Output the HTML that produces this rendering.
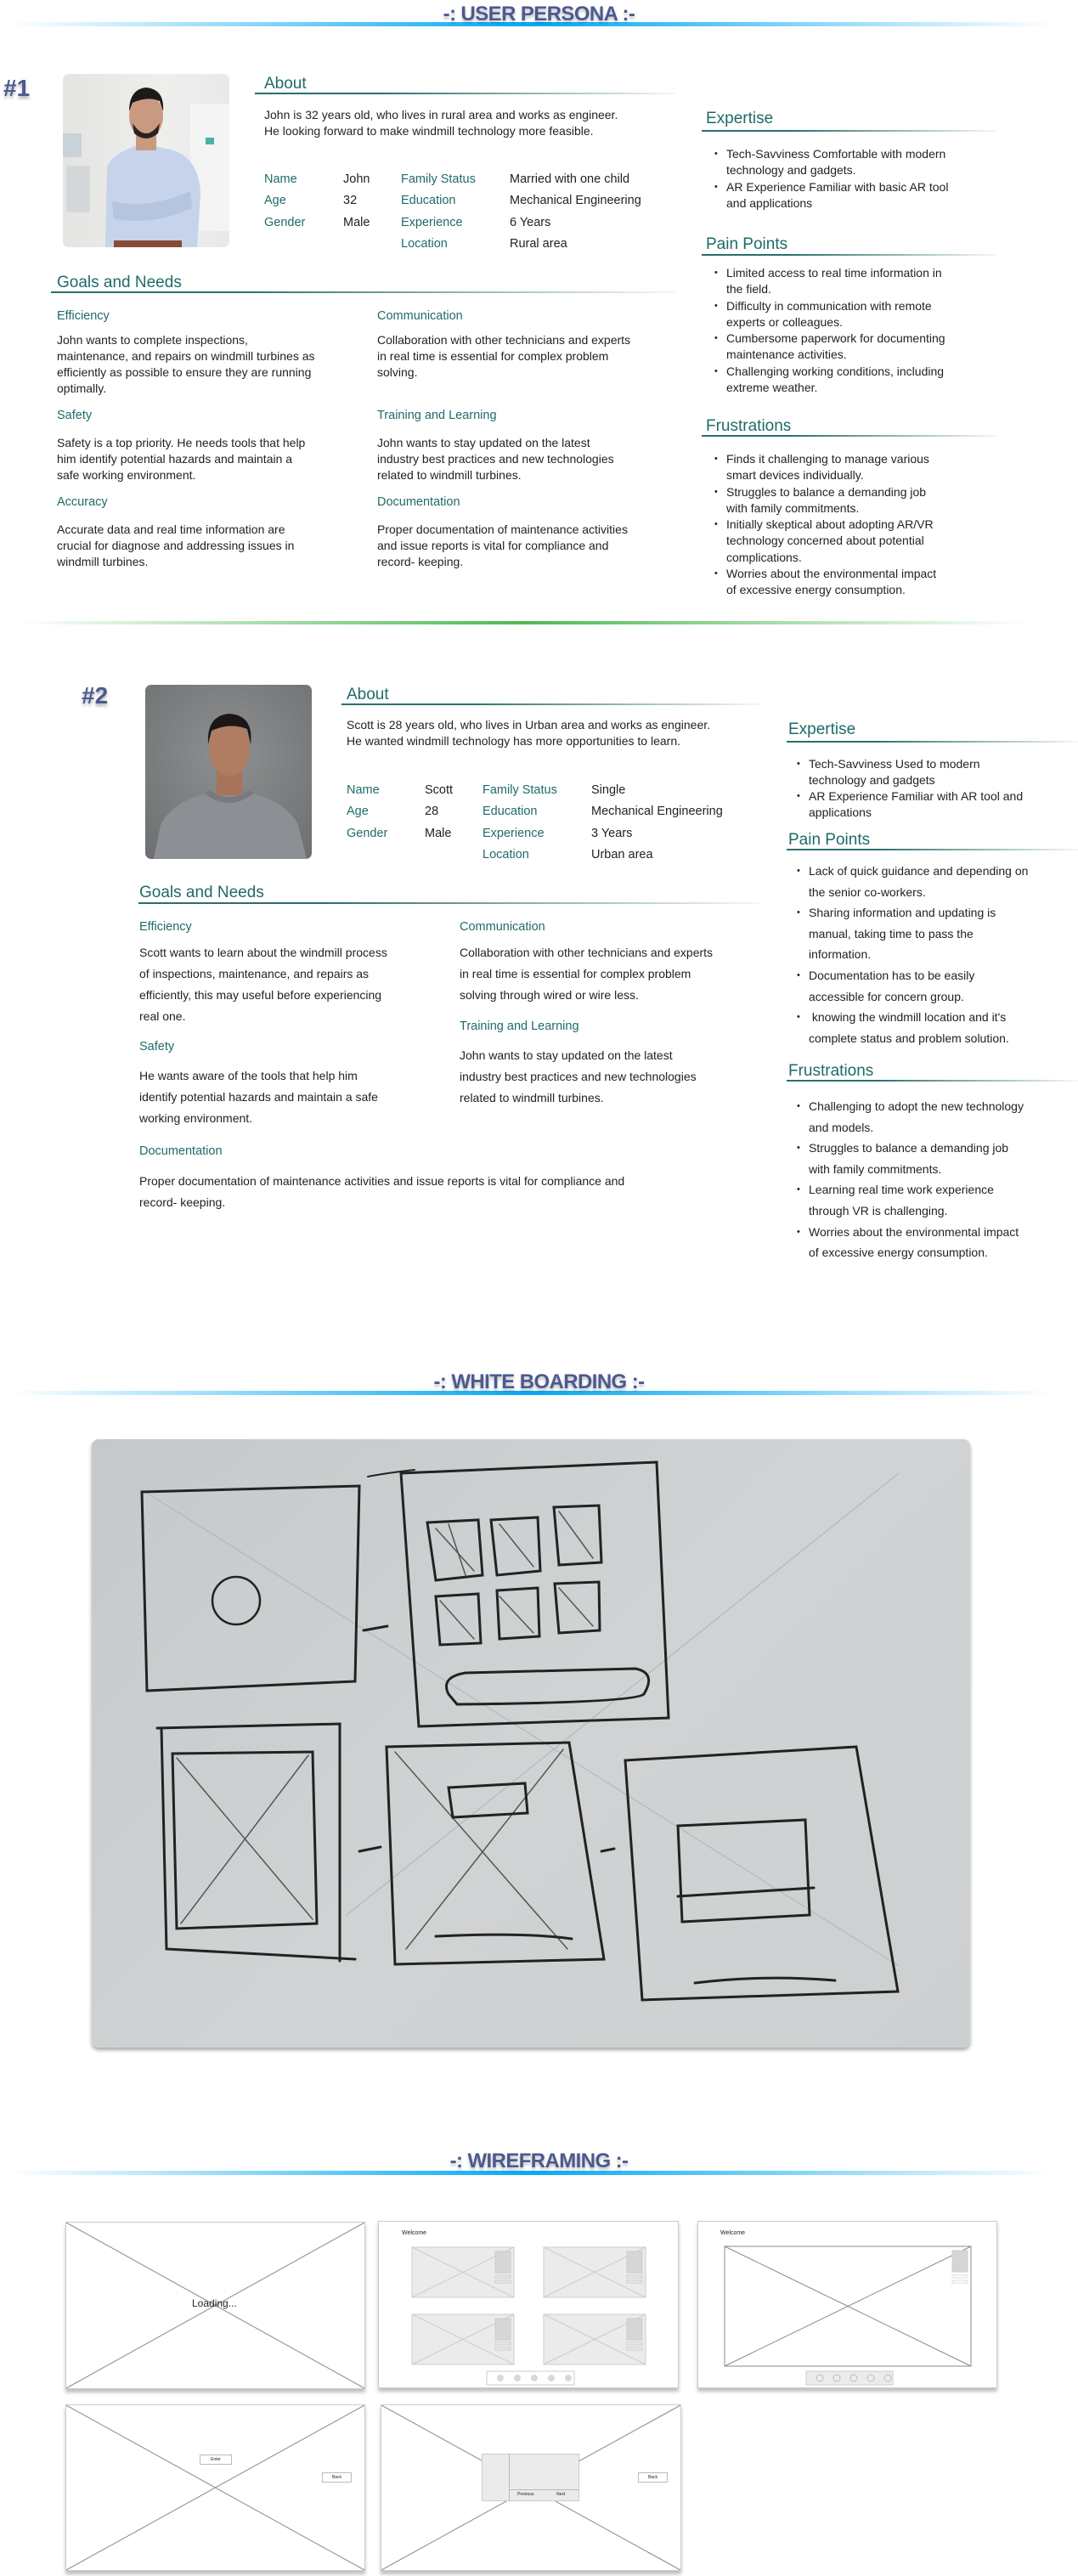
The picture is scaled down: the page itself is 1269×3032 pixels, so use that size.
<!DOCTYPE html>
<html><head><meta charset="utf-8">
<style>
*{margin:0;padding:0;box-sizing:border-box}
body{width:1269px;height:3032px;position:relative;background:#fff;font-family:"Liberation Sans",sans-serif;color:#222;overflow:hidden}
.a{position:absolute}
.title{position:absolute;left:0;width:1269px;text-align:center;font-weight:bold;font-size:24px;color:#4b5a8e;letter-spacing:-0.6px;text-shadow:0 3px 3px rgba(0,0,0,.25);z-index:2;line-height:30px}
.bar{position:absolute;left:10px;width:1230px;height:5px;background:linear-gradient(90deg,rgba(3,169,244,0),#03a9f4 50%,rgba(3,169,244,0))}
.num{position:absolute;font-weight:bold;font-size:28px;color:#4b5a8e;text-shadow:0 3px 3px rgba(0,0,0,.3);line-height:30px}
.h{position:absolute;color:#1e6b68;font-size:19px;line-height:22px}
.hl{position:absolute;height:2px;background:linear-gradient(90deg,#2a6f6c,#2a6f6c 30%,rgba(42,111,108,0.05))}
.lb{position:absolute;color:#1e6b68;font-size:14.5px;line-height:20px}
.t{position:absolute;font-size:14px;color:#222;white-space:nowrap}
.tb{position:absolute;font-size:14.5px}
.tb div{height:25.3px;line-height:25.3px;white-space:nowrap}
.tb .k{color:#1e6b68}
ul{position:absolute;list-style:none;font-size:14px;white-space:nowrap}
ul li{position:relative;padding-left:14px}
ul li:before{content:"•";position:absolute;left:0;font-size:11px}
.card{position:absolute;background:#fff;border:1px solid #ccc;box-shadow:0 4px 4px rgba(0,0,0,.25)}
</style></head><body>

<div class="bar" style="top:26px"></div>
<div class="title" style="top:2px">-: USER PERSONA :-</div>

<!-- Persona 1 -->
<div class="num" style="left:4px;top:89px">#1</div>
<div class="a" style="left:74px;top:87px;width:196px;height:204px;border-radius:7px;overflow:hidden;background:linear-gradient(90deg,#e4e4e2,#eeeeec 60%,#e8eaea)">
<svg width="196" height="204" viewBox="0 0 196 204">
<rect x="150" y="35" width="46" height="150" fill="#f3f4f3"/>
<rect x="168" y="75" width="10" height="8" fill="#4ab0a8"/>
<rect x="0" y="70" width="22" height="28" fill="#c9d2d6"/>
<rect x="4" y="108" width="28" height="55" fill="#d5d8db"/>
<path d="M50 204 L52 110 Q58 92 95 82 L130 90 Q160 100 162 140 L158 204 Z" fill="#c6d3ea"/>
<path d="M58 150 Q100 160 150 138 L152 158 Q100 180 60 170 Z" fill="#b5c4df"/>
<rect x="86" y="68" width="24" height="22" fill="#c99a80"/>
<ellipse cx="98" cy="50" rx="20" ry="26" fill="#c99a80"/>
<path d="M78 44 Q78 18 98 16 Q120 18 118 44 L114 32 Q100 26 82 34 Z" fill="#1e1a18"/>
<path d="M82 58 Q98 82 114 58 L112 70 Q98 82 84 70 Z" fill="#2a2220"/>
<rect x="60" y="196" width="80" height="8" fill="#8a4a36"/>
</svg></div>

<div class="h" style="left:311px;top:88px">About</div>
<div class="hl" style="left:300px;top:109px;width:495px"></div>
<div class="t" style="left:311px;top:126px;line-height:19px">John is 32 years old, who lives in rural area and works as engineer.<br>He looking forward to make windmill technology more feasible.</div>

<div class="tb" style="left:311px;top:199px"><div class="k">Name</div><div class="k">Age</div><div class="k">Gender</div></div>
<div class="tb" style="left:404px;top:199px"><div>John</div><div>32</div><div>Male</div></div>
<div class="tb" style="left:472px;top:199px"><div class="k">Family Status</div><div class="k">Education</div><div class="k">Experience</div><div class="k">Location</div></div>
<div class="tb" style="left:600px;top:199px"><div>Married with one child</div><div>Mechanical Engineering</div><div>6 Years</div><div>Rural area</div></div>

<div class="h" style="left:67px;top:322px">Goals and Needs</div>
<div class="hl" style="left:60px;top:343px;width:735px"></div>

<div class="lb" style="left:67px;top:362px">Efficiency</div>
<div class="t" style="left:67px;top:391px;line-height:19px">John wants to complete inspections,<br>maintenance, and repairs on windmill turbines as<br>efficiently as possible to ensure they are running<br>optimally.</div>
<div class="lb" style="left:67px;top:479px">Safety</div>
<div class="t" style="left:67px;top:512px;line-height:19px">Safety is a top priority. He needs tools that help<br>him identify potential hazards and maintain a<br>safe working environment.</div>
<div class="lb" style="left:67px;top:581px">Accuracy</div>
<div class="t" style="left:67px;top:614px;line-height:19px">Accurate data and real time information are<br>crucial for diagnose and addressing issues in<br>windmill turbines.</div>

<div class="lb" style="left:444px;top:362px">Communication</div>
<div class="t" style="left:444px;top:391px;line-height:19px">Collaboration with other technicians and experts<br>in real time is essential for complex problem<br>solving.</div>
<div class="lb" style="left:444px;top:479px">Training and Learning</div>
<div class="t" style="left:444px;top:512px;line-height:19px">John wants to stay updated on the latest<br>industry best practices and new technologies<br>related to windmill turbines.</div>
<div class="lb" style="left:444px;top:581px">Documentation</div>
<div class="t" style="left:444px;top:614px;line-height:19px">Proper documentation of maintenance activities<br>and issue reports is vital for compliance and<br>record- keeping.</div>

<div class="h" style="left:831px;top:129px">Expertise</div>
<div class="hl" style="left:826px;top:153px;width:347px"></div>
<ul style="left:841px;top:172px;line-height:19.3px">
<li>Tech-Savviness Comfortable with modern<br>technology and gadgets.</li>
<li>AR Experience Familiar with basic AR tool<br>and applications</li></ul>
<div class="h" style="left:831px;top:277px">Pain Points</div>
<div class="hl" style="left:826px;top:299px;width:347px"></div>
<ul style="left:841px;top:312px;line-height:19.3px">
<li>Limited access to real time information in<br>the field.</li>
<li>Difficulty in communication with remote<br>experts or colleagues.</li>
<li>Cumbersome paperwork for documenting<br>maintenance activities.</li>
<li>Challenging working conditions, including<br>extreme weather.</li></ul>
<div class="h" style="left:831px;top:491px">Frustrations</div>
<div class="hl" style="left:826px;top:512px;width:347px"></div>
<ul style="left:841px;top:531px;line-height:19.3px">
<li>Finds it challenging to manage various<br>smart devices individually.</li>
<li>Struggles to balance a demanding job<br>with family commitments.</li>
<li>Initially skeptical about adopting AR/VR<br>technology concerned about potential<br>complications.</li>
<li>Worries about the environmental impact<br>of excessive energy consumption.</li></ul>

<div class="a" style="left:20px;top:731px;width:1190px;height:4px;background:linear-gradient(90deg,rgba(76,187,80,0),#4cbb50 50%,rgba(76,187,80,0))"></div>

<!-- Persona 2 -->
<div class="num" style="left:96px;top:804px">#2</div>
<div class="a" style="left:171px;top:806px;width:196px;height:205px;border-radius:7px;overflow:hidden;background:radial-gradient(circle at 50% 40%,#8d8f90,#6c6e70)">
<svg width="196" height="205" viewBox="0 0 196 205">
<path d="M10 205 L18 165 Q30 140 70 128 L128 128 Q168 140 180 165 L190 205 Z" fill="#8c8f94"/>
<path d="M70 128 Q98 150 128 128 L122 124 Q98 140 76 124 Z" fill="#777a7e"/>
<rect x="84" y="100" width="30" height="30" fill="#a8735a"/>
<ellipse cx="99" cy="75" rx="24" ry="32" fill="#b07c62"/>
<path d="M74 70 Q72 36 99 34 Q128 36 124 70 L120 52 Q100 44 78 54 Z" fill="#1c1716"/>
</svg></div>

<div class="h" style="left:408px;top:807px">About</div>
<div class="hl" style="left:402px;top:828px;width:493px"></div>
<div class="t" style="left:408px;top:844px;line-height:19px">Scott is 28 years old, who lives in Urban area and works as engineer.<br>He wanted windmill technology has more opportunities to learn.</div>

<div class="tb" style="left:408px;top:918px"><div class="k">Name</div><div class="k">Age</div><div class="k">Gender</div></div>
<div class="tb" style="left:500px;top:918px"><div>Scott</div><div>28</div><div>Male</div></div>
<div class="tb" style="left:568px;top:918px"><div class="k">Family Status</div><div class="k">Education</div><div class="k">Experience</div><div class="k">Location</div></div>
<div class="tb" style="left:696px;top:918px"><div>Single</div><div>Mechanical Engineering</div><div>3 Years</div><div>Urban area</div></div>

<div class="h" style="left:164px;top:1040px">Goals and Needs</div>
<div class="hl" style="left:163px;top:1062px;width:732px"></div>

<div class="lb" style="left:164px;top:1081px">Efficiency</div>
<div class="t" style="left:164px;top:1109px;line-height:25px">Scott wants to learn about the windmill process<br>of inspections, maintenance, and repairs as<br>efficiently, this may useful before experiencing<br>real one.</div>
<div class="lb" style="left:164px;top:1222px">Safety</div>
<div class="t" style="left:164px;top:1254px;line-height:25px">He wants aware of the tools that help him<br>identify potential hazards and maintain a safe<br>working environment.</div>
<div class="lb" style="left:164px;top:1345px">Documentation</div>
<div class="t" style="left:164px;top:1378px;line-height:25px">Proper documentation of maintenance activities and issue reports is vital for compliance and<br>record- keeping.</div>

<div class="lb" style="left:541px;top:1081px">Communication</div>
<div class="t" style="left:541px;top:1109px;line-height:25px">Collaboration with other technicians and experts<br>in real time is essential for complex problem<br>solving through wired or wire less.</div>
<div class="lb" style="left:541px;top:1198px">Training and Learning</div>
<div class="t" style="left:541px;top:1230px;line-height:25px">John wants to stay updated on the latest<br>industry best practices and new technologies<br>related to windmill turbines.</div>

<div class="h" style="left:928px;top:848px">Expertise</div>
<div class="hl" style="left:926px;top:872px;width:343px"></div>
<ul style="left:938px;top:890px;line-height:19px">
<li>Tech-Savviness Used to modern<br>technology and gadgets</li>
<li>AR Experience Familiar with AR tool and<br>applications</li></ul>
<div class="h" style="left:928px;top:978px">Pain Points</div>
<div class="hl" style="left:926px;top:999px;width:343px"></div>
<ul style="left:938px;top:1013px;line-height:24.6px">
<li>Lack of quick guidance and depending on<br>the senior co-workers.</li>
<li>Sharing information and updating is<br>manual, taking time to pass the<br>information.</li>
<li>Documentation has to be easily<br>accessible for concern group.</li>
<li>&nbsp;knowing the windmill location and it's<br>complete status and problem solution.</li></ul>
<div class="h" style="left:928px;top:1250px">Frustrations</div>
<div class="hl" style="left:926px;top:1271px;width:343px"></div>
<ul style="left:938px;top:1290px;line-height:24.6px">
<li>Challenging to adopt the new technology<br>and models.</li>
<li>Struggles to balance a demanding job<br>with family commitments.</li>
<li>Learning real time work experience<br>through VR is challenging.</li>
<li>Worries about the environmental impact<br>of excessive energy consumption.</li></ul>

<!-- WHITE BOARDING -->
<div class="bar" style="top:1637px"></div>
<div class="title" style="top:1612px">-: WHITE BOARDING :-</div>
<div class="a" style="left:108px;top:1694px;width:1034px;height:716px;border-radius:8px;overflow:hidden;box-shadow:0 3px 5px rgba(0,0,0,.35);background:linear-gradient(135deg,#c5c9cb,#d0d3d4 50%,#cdd0d1)">
<svg width="1034" height="716" viewBox="0 0 1034 716" fill="none" stroke="#222" stroke-width="3" stroke-linecap="round">
<g stroke="#b0b4b6" stroke-width="1"><path d="M60 60 L950 620"/><path d="M950 40 L300 560"/></g>
<path d="M59 62 L315 55 L310 285 L65 296 Z"/>
<path d="M364 40 L665 27 L679 328 L385 338 Z"/>
<path d="M395 98 L455 95 L460 160 L405 166 Z M470 95 L525 92 L528 155 L477 160 Z M544 80 L597 78 L600 145 L550 148 Z"/>
<path d="M405 185 L455 182 L458 240 L410 242 Z M477 178 L525 175 L527 232 L480 235 Z M545 170 L597 168 L598 225 L550 228 Z"/>
<g stroke-width="1.5" stroke="#555"><path d="M405 105 L450 155 M420 100 L440 160 M480 100 L520 150 M550 85 L590 140 M410 190 L450 235 M480 185 L520 228 M550 175 L590 220"/></g>
<path d="M420 300 Q410 280 440 275 L640 270 Q665 275 650 300 Q640 310 430 312 Z"/>
<path d="M77 340 L292 335 L292 614 M82 340 L88 600 L310 612"/>
<path d="M95 370 L260 368 L265 570 L100 576 Z"/>
<g stroke-width="1.5" stroke="#555"><path d="M100 375 L260 565 M255 372 L105 570 M357 368 L560 600 M555 365 L370 600"/></g>
<path d="M347 362 L562 357 L603 612 L357 618 Z"/>
<path d="M420 410 L510 405 L513 440 L425 445 Z"/>
<path d="M405 585 Q510 580 565 588"/>
<path d="M628 378 L900 362 L949 650 L648 660 Z"/>
<path d="M690 455 L840 448 L845 560 L695 568 Z M690 538 L850 528"/>
<path d="M710 640 Q790 630 875 637"/>
<path d="M320 225 L348 220 M315 485 L340 480 M600 485 L615 482"/>
<circle cx="170" cy="190" r="28" stroke-width="2.5"/>
<path d="M325 44 Q345 40 380 36" stroke-width="2"/>
</svg></div>

<!-- WIREFRAMING -->
<div class="bar" style="top:2555px"></div>
<div class="title" style="top:2529px">-: WIREFRAMING :-</div>

<div class="card" style="left:77px;top:2615px;width:353px;height:197px">
<svg width="351" height="195" class="a" style="left:0;top:0"><path d="M0 0 L351 195 M351 0 L0 195" stroke="#888" stroke-width="1"/></svg>
<div class="a" style="left:148px;top:88px;font-size:12px">Loading...</div></div>

<div class="card" style="left:445px;top:2614px;width:354px;height:197px">
<div class="a" style="left:27px;top:10px;font-size:7px">Welcome</div>
<svg width="354" height="197" class="a" style="left:-1px;top:-1px" fill="#ebebeb" stroke="#ccc" stroke-width="1">
<g><rect x="40" y="31" width="120" height="59"/><path d="M40 31 L160 90 M160 31 L40 90"/><rect x="138" y="36" width="18" height="25" fill="#d6d6d6"/><rect x="138" y="64" width="18" height="3"/><rect x="138" y="70" width="18" height="3"/></g>
<g transform="translate(155 0)"><rect x="40" y="31" width="120" height="59"/><path d="M40 31 L160 90 M160 31 L40 90"/><rect x="138" y="36" width="18" height="25" fill="#d6d6d6"/><rect x="138" y="64" width="18" height="3"/><rect x="138" y="70" width="18" height="3"/></g>
<g transform="translate(0 79)"><rect x="40" y="31" width="120" height="59"/><path d="M40 31 L160 90 M160 31 L40 90"/><rect x="138" y="36" width="18" height="25" fill="#d6d6d6"/><rect x="138" y="64" width="18" height="3"/><rect x="138" y="70" width="18" height="3"/></g>
<g transform="translate(155 79)"><rect x="40" y="31" width="120" height="59"/><path d="M40 31 L160 90 M160 31 L40 90"/><rect x="138" y="36" width="18" height="25" fill="#d6d6d6"/><rect x="138" y="64" width="18" height="3"/><rect x="138" y="70" width="18" height="3"/></g>
<rect x="128" y="177" width="103" height="16" fill="#fff"/>
<g fill="#d8d8d8" stroke="none"><circle cx="144" cy="185" r="4"/><circle cx="164" cy="185" r="4"/><circle cx="184" cy="185" r="4"/><circle cx="204" cy="185" r="4"/><circle cx="224" cy="185" r="4"/></g>
</svg></div>

<div class="card" style="left:821px;top:2614px;width:353px;height:197px">
<div class="a" style="left:26px;top:10px;font-size:7px">Welcome</div>
<svg width="353" height="197" class="a" style="left:-1px;top:-1px" fill="none" stroke="#888" stroke-width="1">
<rect x="32" y="30" width="290" height="141"/><path d="M32 30 L322 171 M322 30 L32 171"/>
<rect x="300" y="35" width="18" height="25" fill="#d6d6d6" stroke="#ccc"/><rect x="300" y="64" width="18" height="3" stroke="#ddd"/><rect x="300" y="70" width="18" height="3" stroke="#ddd"/>
<rect x="128" y="177" width="102" height="16" fill="#ececec" stroke="#ccc"/>
<g stroke="#bbb"><circle cx="144" cy="185" r="4"/><circle cx="164" cy="185" r="4"/><circle cx="184" cy="185" r="4"/><circle cx="204" cy="185" r="4"/><circle cx="224" cy="185" r="4"/></g>
</svg></div>

<div class="card" style="left:77px;top:2830px;width:353px;height:196px">
<svg width="351" height="194" class="a" style="left:0;top:0"><path d="M0 0 L351 194 M351 0 L0 194" stroke="#888" stroke-width="1"/></svg>
<div class="a" style="left:157px;top:58px;width:38px;height:12px;background:#fff;border:1px solid #bbb;font-size:5px;text-align:center;line-height:10px">Enter</div>
<div class="a" style="left:301px;top:79px;width:35px;height:12px;background:#fff;border:1px solid #bbb;font-size:5px;text-align:center;line-height:10px">Back</div></div>

<div class="card" style="left:448px;top:2830px;width:354px;height:196px">
<svg width="352" height="194" class="a" style="left:0;top:0"><path d="M0 0 L352 194 M352 0 L0 194" stroke="#888" stroke-width="1"/></svg>
<div class="a" style="left:118px;top:57px;width:115px;height:56px;background:#ebebeb;border:1px solid #ccc"></div>
<div class="a" style="left:150px;top:57px;width:1px;height:56px;background:#bbb"></div>
<div class="a" style="left:150px;top:99px;width:83px;height:1px;background:#bbb"></div>
<div class="a" style="left:160px;top:102px;font-size:5px">Previous</div>
<div class="a" style="left:206px;top:102px;font-size:5px">Next</div>
<div class="a" style="left:302px;top:79px;width:35px;height:12px;background:#fff;border:1px solid #bbb;font-size:5px;text-align:center;line-height:10px">Back</div></div>

</body></html>
